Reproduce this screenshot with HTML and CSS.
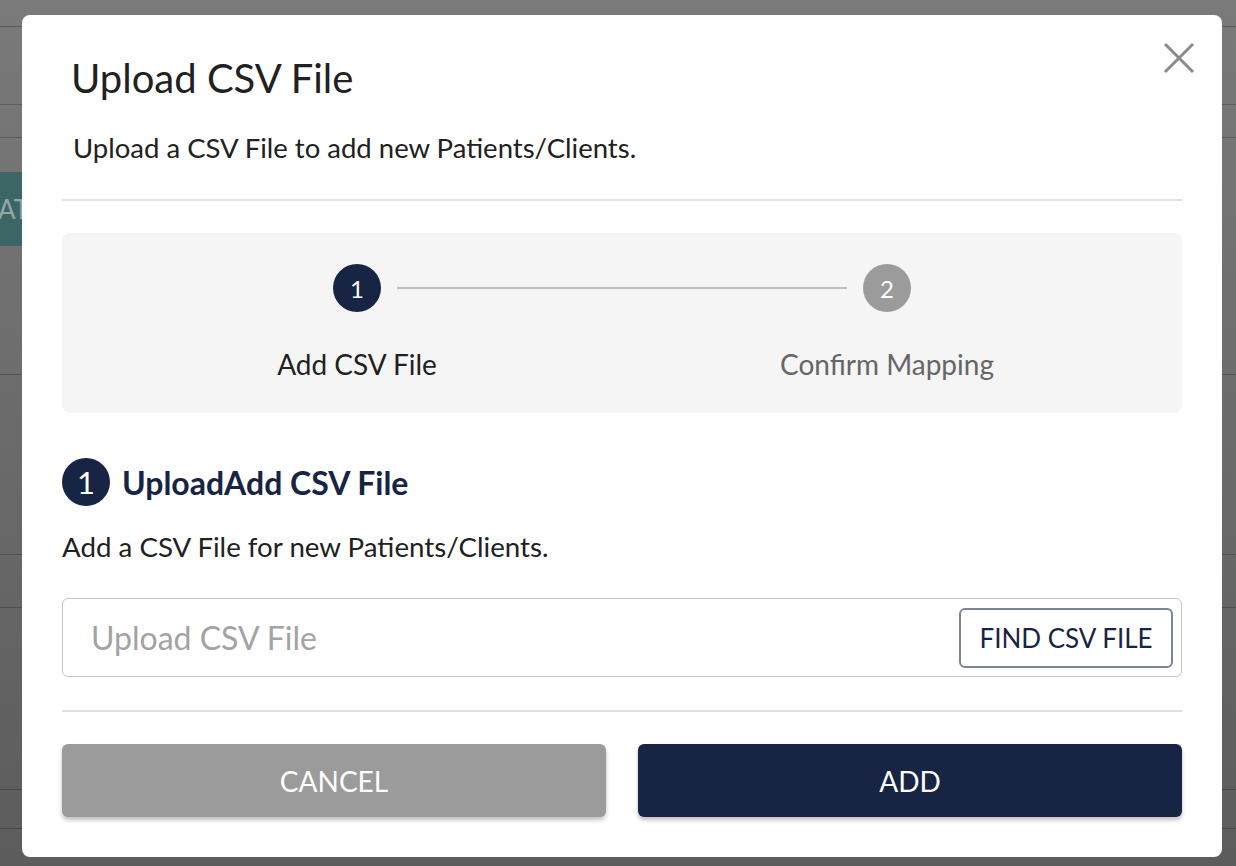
FILE: index.html
```html
<!DOCTYPE html>
<html lang="en">
<head>
<meta charset="utf-8">
<title>Upload CSV File</title>
<link rel="stylesheet" href="styles.css">
</head>
<body>
<div class="page">
  <div class="row r1"></div>
  <div class="row r2"></div>
  <div class="row r3"></div>
  <div class="teal"><span>AT</span></div>
  <div class="row r4"></div>
  <div class="row r5"></div>
  <div class="row r6"></div>
  <div class="row r7"></div>
  <div class="row r8"></div>
</div>

<div class="modal">
  <button class="close" aria-label="Close">
    <svg width="32" height="32" viewBox="0 0 32 32"><path d="M2 2 L30 30 M30 2 L2 30" stroke="#8a8a8a" stroke-width="3" fill="none"/></svg>
  </button>
  <h1 class="title">Upload CSV File</h1>
  <p class="subtitle">Upload a CSV File to add new Patients/Clients.</p>
  <div class="divider d1"></div>

  <div class="stepper">
    <div class="step">
      <div class="step-icon active">1</div>
      <div class="step-label active">Add CSV File</div>
      <div class="connector"></div>
    </div>
    <div class="step">
      <div class="step-icon">2</div>
      <div class="step-label">Confirm Mapping</div>
    </div>
  </div>

  <div class="section-head">
    <div class="num">1</div>
    <h2>UploadAdd CSV File</h2>
  </div>
  <p class="desc">Add a CSV File for new Patients/Clients.</p>

  <div class="file-input">
    <span class="placeholder">Upload CSV File</span>
    <button class="find">FIND CSV FILE</button>
  </div>

  <div class="divider d2"></div>

  <div class="actions">
    <button class="btn cancel">CANCEL</button>
    <button class="btn add">ADD</button>
  </div>
</div>
</body>
</html>
```
FILE: styles.css
```css
* { box-sizing: border-box; }
html, body { margin: 0; padding: 0; }
body {
  width: 1236px;
  height: 866px;
  overflow: hidden;
  font-family: "Lato", "Liberation Sans", sans-serif;
  background: linear-gradient(#7a7a7a, #5c5c5c);
}

.page { display: flex; flex-direction: column; }
.row { border-bottom: 1px solid rgba(40,40,40,0.35); }
.r1 { height: 27px; }
.r2 { height: 78px; }
.r3 { height: 33px; margin-bottom: 34px; }
.teal {
  height: 74px;
  width: 120px;
  background: #3e6566;
  color: #8fa9a9;
  font-size: 26px;
  display: flex;
  align-items: center;
}
.teal span { margin-left: -2px; }
.r4 { height: 129px; }
.r5 { height: 180px; }
.r6 { height: 53px; }
.r7 { height: 182px; }
.r8 { height: 39px; }

.modal {
  position: fixed;
  top: 15px;
  left: 22px;
  width: 1200px;
  height: 842px;
  background: #fff;
  border-radius: 8px;
  padding: 39px 40px 40px;
  display: flex;
  flex-direction: column;
}

.close {
  position: absolute;
  top: 27px;
  right: 27px;
  width: 32px;
  height: 32px;
  padding: 0;
  border: 0;
  background: none;
  cursor: pointer;
}
.close svg { display: block; }

.title {
  margin: 0 0 0 9px;
  font-size: 40px;
  line-height: 48px;
  font-weight: 400;
  color: #212121;
}
.subtitle {
  margin: 29px 0 0 11px;
  font-size: 27.5px;
  line-height: 33px;
  color: #212121;
}
.divider { height: 2px; background: #e0e0e0; }
.d1 { margin-top: 35px; }

.stepper {
  margin-top: 32px;
  height: 180px;
  background: #f5f5f5;
  border-radius: 8px;
  padding: 31px 30px 0;
  display: flex;
}
.step {
  flex: 1;
  position: relative;
  display: flex;
  flex-direction: column;
  align-items: center;
}
.step-icon {
  width: 48px;
  height: 48px;
  border-radius: 50%;
  background: #9b9b9b;
  color: #fff;
  font-size: 24px;
  display: flex;
  align-items: center;
  justify-content: center;
}
.step-icon.active { background: #172444; }
.step-label {
  margin-top: 35px;
  font-size: 28px;
  line-height: 34px;
  color: #666;
}
.step-label.active { color: #212121; }
.connector {
  position: absolute;
  top: 23px;
  left: calc(50% + 40px);
  right: calc(-50% + 40px);
  height: 2px;
  background: #bdbdbd;
}

.section-head {
  margin-top: 45px;
  display: flex;
  align-items: center;
  gap: 12px;
}
.num {
  width: 48px;
  height: 48px;
  border-radius: 50%;
  background: #172444;
  color: #fff;
  font-size: 31px;
  display: flex;
  align-items: center;
  justify-content: center;
}
.section-head h2 {
  margin: 0;
  font-size: 32px;
  font-weight: 700;
  color: #172444;
}
.desc {
  margin: 24px 0 0;
  font-size: 27.7px;
  line-height: 34px;
  color: #212121;
}

.file-input {
  margin-top: 34px;
  height: 79px;
  border: 1.5px solid #c4c4c4;
  border-radius: 6px;
  display: flex;
  align-items: center;
  justify-content: space-between;
  padding: 0 8px 0 28px;
}
.placeholder {
  font-size: 32px;
  color: #a3a3a3;
}
.find {
  height: 60px;
  width: 214px;
  border: 2px solid #7b8596;
  border-radius: 6px;
  background: #fff;
  color: #172444;
  font-family: "Lato", sans-serif;
  font-size: 26px;
  padding: 0;
}

.d2 { margin-top: 33px; }

.actions {
  margin-top: 32px;
  display: flex;
  gap: 32px;
}
.btn {
  flex: 1;
  height: 73px;
  border: 0;
  border-radius: 6px;
  color: #fff;
  font-family: "Lato", sans-serif;
  font-size: 28px;
  box-shadow: 0 3px 4px rgba(0,0,0,0.25);
}
.cancel { background: #9b9b9b; }
.add { background: #172444; }
```
